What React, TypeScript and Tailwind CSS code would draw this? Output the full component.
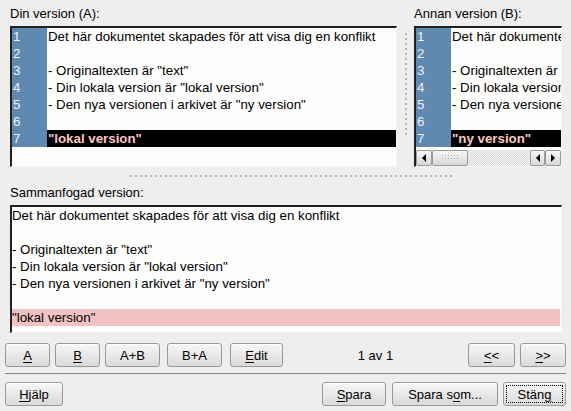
import React from "react";

const baseLines = [
  "Det här dokumentet skapades för att visa dig en konflikt",
  "",
  '- Originaltexten är "text"',
  '- Din lokala version är "lokal version"',
  '- Den nya versionen i arkivet är "ny version"',
  "",
];

function DiffRows({ last }: { last: string }) {
  return (
    <div className="flex flex-col text-[13.3px]">
      {baseLines.map((l, i) => (
        <div key={i} className="flex h-[17px]">
          <div className="w-[35px] shrink-0 bg-[#6089b2] pl-[1px] text-[#eef2f8]">{i + 1}</div>
          <div className="flex-1 overflow-hidden whitespace-nowrap pl-[1px]">{l}</div>
        </div>
      ))}
      <div className="flex h-[17px]">
        <div className="w-[35px] shrink-0 bg-[#6089b2] pl-[1px] text-[#eef2f8]">7</div>
        <div className="flex-1 overflow-hidden whitespace-nowrap bg-black pl-[1px] font-bold text-[#ffc4c4]">{last}</div>
      </div>
    </div>
  );
}

function Btn({ children, className }: { children: React.ReactNode; className: string }) {
  return (
    <div
      className={
        "flex h-[24px] shrink-0 items-center justify-center rounded-[3px] border border-[#9a9a9a] bg-linear-to-b from-[#f7f7f7] to-[#dadada] text-[13px] text-black shadow-[inset_0_1px_0_#ffffff] " +
        className
      }
    >
      {children}
    </div>
  );
}

function ArrowBtn({ dir, className }: { dir: "l" | "r"; className: string }) {
  return (
    <div
      className={
        "flex h-[16px] items-center justify-center rounded-[2px] border border-[#9a9a9a] bg-linear-to-b from-[#f7f7f7] to-[#d8d8d8] " +
        className
      }
    >
      <svg width="6" height="8" viewBox="0 0 6 8">
        {dir === "l" ? <polygon points="5,0 5,8 1,4" fill="#000" /> : <polygon points="1,0 1,8 5,4" fill="#000" />}
      </svg>
    </div>
  );
}

const boxCls =
  "border-t-2 border-l-2 border-r border-b border-t-[#202020] border-l-[#202020] border-r-[#f4f4f4] border-b-[#f4f4f4] bg-[#fdfdfc] overflow-hidden";

export default function App() {
  return (
    <div className="relative flex h-[411px] w-[571px] flex-col overflow-hidden bg-[#eeeeee] font-['Liberation_Sans',Arial,sans-serif] text-[13px] leading-[17px] text-black">
      {/* top panes */}
      <div className="flex pl-[10px]">
        <div className="flex w-[387px] flex-col">
          <div className="h-[26px] pt-[5px]">Din version (A):</div>
          <div className={"h-[141px] " + boxCls}>
            <DiffRows last={'"lokal version"'} />
          </div>
        </div>
        <div className="flex w-[17px] justify-center pt-[33px]">
          <div className="h-[104px] w-[2px] bg-[repeating-linear-gradient(to_bottom,#b4b4b4_0px,#b4b4b4_2px,transparent_2px,transparent_5px)]" />
        </div>
        <div className="flex w-[148px] flex-col">
          <div className="h-[26px] pt-[5px] whitespace-nowrap">Annan version (B):</div>
          <div className={"flex h-[141px] flex-col " + boxCls}>
            <DiffRows last={'"ny version"'} />
            <div className="flex-1" />
            <div className="flex h-[16px] bg-[repeating-conic-gradient(#dadada_0%_25%,#f4f4f4_0%_50%)] bg-[length:2px_2px]">
              <ArrowBtn dir="l" className="w-[16px]" />
              <div className="flex h-[16px] w-[36px] items-center justify-center rounded-[2px] border border-[#9a9a9a] bg-linear-to-b from-[#f7f7f7] to-[#d8d8d8]">
                <svg width="16" height="6" viewBox="0 0 16 6">
                  {[0, 3, 6, 9, 12, 15].map((x) => (
                    <React.Fragment key={x}>
                      <rect x={x} y="0" width="1" height="1" fill="#a8a8a8" />
                      <rect x={x} y="3" width="1" height="1" fill="#a8a8a8" />
                    </React.Fragment>
                  ))}
                </svg>
              </div>
              <div className="flex-1" />
              <ArrowBtn dir="l" className="w-[15px]" />
              <ArrowBtn dir="r" className="w-[16px]" />
            </div>
          </div>
        </div>
      </div>

      {/* horizontal splitter */}
      <div className="flex h-[17px] items-center pl-[130px]">
        <div className="h-[2px] w-[325px] bg-[repeating-linear-gradient(to_right,#b4b4b4_0px,#b4b4b4_2px,transparent_2px,transparent_5px)]" />
      </div>

      {/* merged */}
      <div className="h-[21px] pl-[10px]">Sammanfogad version:</div>
      <div className={"ml-[10px] h-[128px] w-[552px] text-[13.3px] " + boxCls}>
        {baseLines.map((l, i) => (
          <div key={i} className="h-[17px] whitespace-nowrap">
            {l}
          </div>
        ))}
        <div className="mr-[1px] h-[17px] whitespace-nowrap bg-[#f0c2c2]">"lokal version"</div>
      </div>

      {/* action buttons */}
      <div className="mt-[10px] flex items-center px-[5px]">
        <Btn className="w-[45px]">
          <span className="underline underline-offset-2">A</span>
        </Btn>
        <Btn className="ml-[5px] w-[45px]">
          <span className="underline underline-offset-2">B</span>
        </Btn>
        <Btn className="ml-[5px] w-[55px]">A+B</Btn>
        <Btn className="ml-[7px] w-[55px]">B+A</Btn>
        <Btn className="ml-[8px] w-[53px]">
          <span>
            <span className="underline underline-offset-2">E</span>dit
          </span>
        </Btn>
        <div className="flex-1 text-center">1 av 1</div>
        <Btn className="w-[47px]">
          <span>
            <span className="underline underline-offset-2">&lt;</span>&lt;
          </span>
        </Btn>
        <Btn className="ml-[5px] w-[46px]">
          <span>
            <span className="underline underline-offset-2">&gt;</span>&gt;
          </span>
        </Btn>
      </div>

      {/* separator */}
      <div className="mx-[5px] mt-[6px] h-[1px] bg-[#858585]" />

      {/* bottom buttons */}
      <div className="mt-[8px] flex items-center px-[5px]">
        <Btn className="w-[58px]">
          <span>
            <span className="underline underline-offset-2">H</span>jälp
          </span>
        </Btn>
        <div className="flex-1" />
        <Btn className="w-[64px]">
          <span>
            <span className="underline underline-offset-2">S</span>para
          </span>
        </Btn>
        <Btn className="ml-[6px] w-[106px]">
          <span>
            Spara s<span className="underline underline-offset-2">o</span>m...
          </span>
        </Btn>
        <Btn className="ml-[5px] w-[63px] border-[#5a5a5a] p-[2px]">
          <span className="flex h-full w-full items-center justify-center border border-dotted border-black">
            <span>
              Stän<span className="underline underline-offset-2">g</span>
            </span>
          </span>
        </Btn>
      </div>
    </div>
  );
}
